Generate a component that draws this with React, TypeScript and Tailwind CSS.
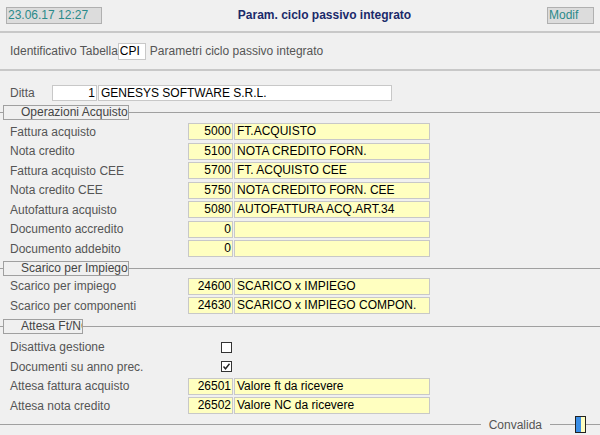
import React from 'react';

const font = { fontFamily: '"Liberation Sans", Arial, sans-serif' };

const Legend = ({ title, w }: { title: string; w: string }) => (
  <div className="flex items-center h-[15px]">
    <div className="w-[3px] shrink-0 border-t border-[#a0a0a0]" />
    <div className={`${w} shrink-0 h-[15px] border border-[#a0a0a0] bg-[#f0f0f0] text-[12px] leading-[13px] text-[#444] pl-[17px] whitespace-nowrap overflow-hidden`}>{title}</div>
    <div className="flex-1 border-t border-[#a0a0a0]" />
  </div>
);

const Row = ({ label, code, desc }: { label: string; code: string; desc: string }) => (
  <div className="flex items-center h-[19.5px]">
    <div className="w-[188px] pl-[10px] text-[12px] text-[#555]">{label}</div>
    <div className="w-[45px] h-[17px] border border-[#c8c8c8] bg-[#ffffc0] text-right pr-[1px] text-[12px] leading-[15px] text-black">{code}</div>
    <div className="ml-[1px] w-[196px] h-[17px] border border-[#c8c8c8] bg-[#ffffc0] pl-[2px] text-[12px] leading-[15px] text-black">{desc}</div>
  </div>
);

const Check = ({ label, checked }: { label: string; checked?: boolean }) => (
  <div className="flex items-center h-[19.5px]">
    <div className="w-[221px] pl-[10px] text-[12px] text-[#555]">{label}</div>
    <div className="w-[11px] h-[11px] border border-[#333] bg-white flex items-center justify-center">
      {checked && (
        <svg width="9" height="9" viewBox="0 0 9 9"><path d="M1.5 4.5 L3.5 6.8 L7.5 1.8" stroke="#222" strokeWidth="1.4" fill="none" /></svg>
      )}
    </div>
  </div>
);

export default function App() {
  return (
    <div style={font} className="w-[600px] h-[435px] bg-[#f0f0f0] overflow-hidden relative">
      <div className="flex items-center h-[28px] px-[6px] pt-[2px]">
        <div className="w-[96px] h-[17px] bg-[#dcdcdc] border border-[#b0b0b0] text-[12px] leading-[15px] text-[#2a8a8a] pl-[1px]">23.06.17 12:27</div>
        <div className="flex-1 text-center text-[12px] font-bold text-[#1a2a6a]">Param. ciclo passivo integrato</div>
        <div className="w-[47px] h-[17px] bg-[#dcdcdc] border border-[#b0b0b0] text-[12px] leading-[15px] text-[#2a8a8a] pl-[1px]">Modif</div>
      </div>
      <div className="mt-[3px] border-t-2 border-[#c8c8c8]" />
      <div className="flex items-center h-[36px] pl-[10px] text-[12px] text-[#555]">
        <span>Identificativo Tabella</span>
        <div className="w-[28px] h-[17px] border border-[#c8c8c8] bg-white text-black leading-[15px] pl-[1px]">CPI</div>
        <span className="ml-[4px]">Parametri ciclo passivo integrato</span>
      </div>
      <div className="border-t-2 border-[#c8c8c8]" />
      <div className="flex items-center h-[40px] pt-[3px] pl-[10px] text-[12px]">
        <span className="w-[42px] text-[#555]">Ditta</span>
        <div className="w-[45px] h-[16px] border border-[#c8c8c8] bg-white text-right pr-[1px] leading-[14px]">1</div>
        <div className="ml-[1px] w-[294px] h-[16px] border border-[#c8c8c8] bg-white pl-[2px] leading-[14px]">GENESYS SOFTWARE S.R.L.</div>
      </div>
      <div className="-mt-[6px]">
        <Legend title="Operazioni Acquisto" w="w-[126px]" />
      </div>
      <div className="pt-[2px]">
        <Row label="Fattura acquisto" code="5000" desc="FT.ACQUISTO" />
        <Row label="Nota credito" code="5100" desc="NOTA CREDITO FORN." />
        <Row label="Fattura acquisto CEE" code="5700" desc="FT. ACQUISTO CEE" />
        <Row label="Nota credito CEE" code="5750" desc="NOTA CREDITO FORN. CEE" />
        <Row label="Autofattura acquisto" code="5080" desc="AUTOFATTURA ACQ.ART.34" />
        <Row label="Documento accredito" code="0" desc="" />
        <Row label="Documento addebito" code="0" desc="" />
      </div>
      <div className="mt-[2px]">
        <Legend title="Scarico per Impiego" w="w-[126px]" />
      </div>
      <div className="pt-[1px]">
        <Row label="Scarico per impiego" code="24600" desc="SCARICO x IMPIEGO" />
        <Row label="Scarico per componenti" code="24630" desc="SCARICO x IMPIEGO COMPON." />
      </div>
      <div className="mt-[3px]">
        <Legend title="Attesa Ft/NC" w="w-[80px]" />
      </div>
      <div className="pt-[4px]">
        <Check label="Disattiva gestione" />
        <Check label="Documenti su anno prec." checked />
        <Row label="Attesa fattura acquisto" code="26501" desc="Valore ft da ricevere" />
        <Row label="Attesa nota credito" code="26502" desc="Valore NC da ricevere" />
      </div>
      <div className="flex items-center h-[18px]">
        <div className="flex-1 border-t border-[#a0a0a0]" />
        <span className="px-[8px] text-[12px] text-[#555]">Convalida</span>
        <div className="w-[25px] border-t border-[#a0a0a0]" />
        <div className="w-[11px] h-[17px] border border-[#222] flex">
          <div className="w-1/2 bg-[#3a8ee6]" />
          <div className="w-1/2 bg-[#ffffc0]" />
        </div>
        <div className="w-[14px] border-t border-[#a0a0a0]" />
      </div>
    </div>
  );
}
